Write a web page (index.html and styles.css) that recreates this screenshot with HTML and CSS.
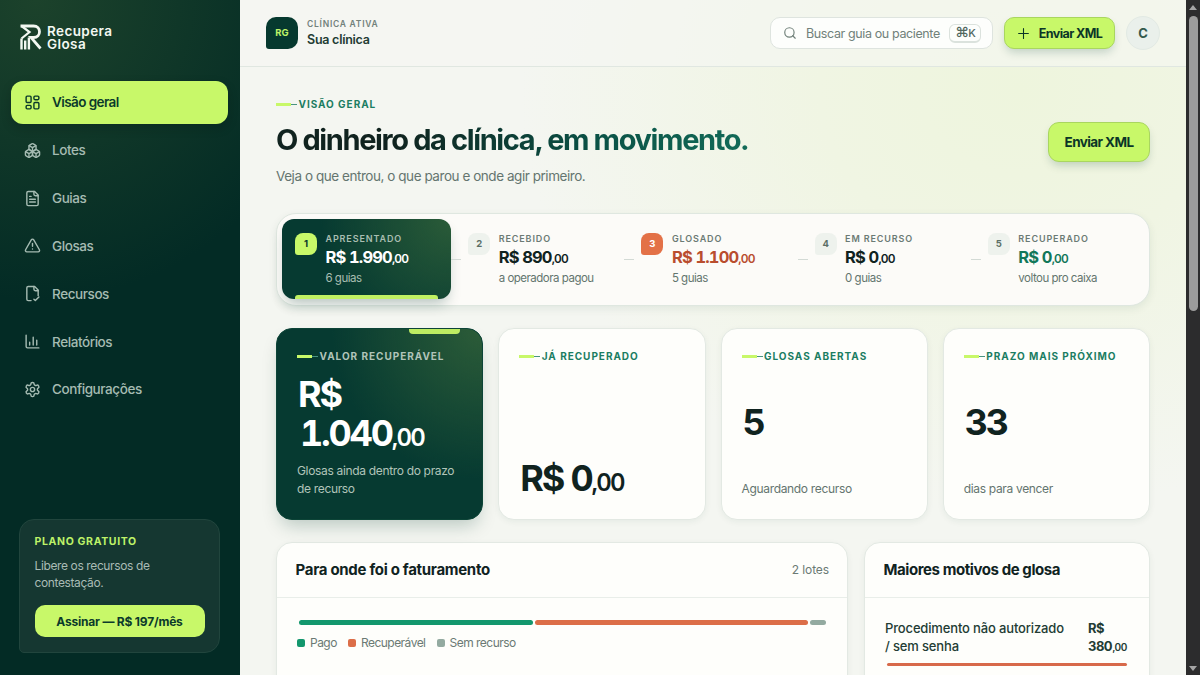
FILE: index.html
```html
<!DOCTYPE html>
<html lang="pt-BR">
<head>
<meta charset="UTF-8">
<title>Recupera Glosa</title>
<link rel="stylesheet" href="styles.css">
</head>
<body>
<div class="app">
  <aside class="sidebar">
    <div class="brand">
      <svg class="brand-mark" viewBox="0 0 22 26" fill="none" stroke="currentColor">
        <path d="M.500 2h13c8 0 8 11.500 0 11.500H11l9.500 11" stroke-width="2.800"/>
        <path d="M1.500 2l8 6-8 6.500" stroke-width="2.200"/>
        <path d="M1.500 14.500V25.500M5.200 16.500v9M8.900 13.500v12" stroke-width="2.400"/>
      </svg>
      <div class="brand-name">Recupera<br>Glosa</div>
    </div>
    <nav class="nav">
      <a class="nav-item active">
        <svg class="icon" viewBox="0 0 24 24"><rect x="3" y="3" width="7" height="9" rx="1.500"/><rect x="14" y="3" width="7" height="5" rx="1.500"/><rect x="14" y="12" width="7" height="9" rx="1.500"/><rect x="3" y="16" width="7" height="5" rx="1.500"/></svg>
        <span>Visão geral</span>
      </a>
      <a class="nav-item lotes">
        <svg class="icon" viewBox="0 0 24 24"><path d="M2.970 12.920A2 2 0 0 0 2 14.630v3.240a2 2 0 0 0 .970 1.710l3 1.800a2 2 0 0 0 2.060 0L12 19v-5.500l-5-3-4.030 2.420Z"/><path d="m7 16.500-4.740-2.850M7 16.500l5-3M7 16.500v5.170"/><path d="M12 13.500V19l3.970 2.380a2 2 0 0 0 2.060 0l3-1.800a2 2 0 0 0 .970-1.710v-3.240a2 2 0 0 0-.970-1.710L17 10.500l-5 3Z"/><path d="m17 16.500-5-3M17 16.500l4.740-2.850M17 16.500v5.170"/><path d="M7.970 4.420A2 2 0 0 0 7 6.130v4.370l5 3 5-3V6.130a2 2 0 0 0-.970-1.710l-3-1.800a2 2 0 0 0-2.060 0l-3 1.800Z"/><path d="M12 8 7.260 5.150M12 8l4.740-2.850M12 13.500V8"/></svg>
        <span>Lotes</span>
      </a>
      <a class="nav-item guias">
        <svg class="icon" viewBox="0 0 24 24"><path d="M15 2H6a2 2 0 0 0-2 2v16a2 2 0 0 0 2 2h12a2 2 0 0 0 2-2V7Z"/><path d="M14 2v4a2 2 0 0 0 2 2h4M10 9H8M16 13H8M16 17H8"/></svg>
        <span>Guias</span>
      </a>
      <a class="nav-item glosas">
        <svg class="icon" viewBox="0 0 24 24"><path d="m21.730 18-8-14a2 2 0 0 0-3.480 0l-8 14A2 2 0 0 0 4 21h16a2 2 0 0 0 1.730-3"/><path d="M12 9v4M12 17h.010"/></svg>
        <span>Glosas</span>
      </a>
      <a class="nav-item recursos">
        <svg class="icon" viewBox="0 0 24 24"><path d="M10 22H6a2 2 0 0 1-2-2V4a2 2 0 0 1 2-2h9l5 5v8"/><path d="M14 2v4a2 2 0 0 0 2 2h4"/><path d="m14 20 2 2 5-5"/></svg>
        <span>Recursos</span>
      </a>
      <a class="nav-item relatorios">
        <svg class="icon" viewBox="0 0 24 24"><path d="M3 3v16a2 2 0 0 0 2 2h16M13 17V6M18 17v-7M8 17v-4"/></svg>
        <span>Relatórios</span>
      </a>
      <a class="nav-item config">
        <svg class="icon" viewBox="0 0 24 24"><path d="M12.220 2h-.440a2 2 0 0 0-2 2v.180a2 2 0 0 1-1 1.730l-.430.250a2 2 0 0 1-2 0l-.150-.080a2 2 0 0 0-2.730.730l-.220.380a2 2 0 0 0 .730 2.730l.150.100a2 2 0 0 1 1 1.720v.510a2 2 0 0 1-1 1.740l-.150.090a2 2 0 0 0-.730 2.730l.220.380a2 2 0 0 0 2.730.730l.150-.080a2 2 0 0 1 2 0l.430.250a2 2 0 0 1 1 1.730V20a2 2 0 0 0 2 2h.440a2 2 0 0 0 2-2v-.180a2 2 0 0 1 1-1.730l.430-.250a2 2 0 0 1 2 0l.150.080a2 2 0 0 0 2.730-.730l.220-.390a2 2 0 0 0-.730-2.730l-.150-.080a2 2 0 0 1-1-1.740v-.500a2 2 0 0 1 1-1.740l.150-.090a2 2 0 0 0 .730-2.730l-.220-.380a2 2 0 0 0-2.730-.730l-.150.080a2 2 0 0 1-2 0l-.430-.250a2 2 0 0 1-1-1.730V4a2 2 0 0 0-2-2z"/><circle cx="12" cy="12" r="3"/></svg>
        <span>Configurações</span>
      </a>
    </nav>
    <div class="plan">
      <div class="plan-title">PLANO GRATUITO</div>
      <p class="plan-text">Libere os recursos de<br>contestação.</p>
      <button class="plan-btn"><span>Assinar — R$ 197/mês</span></button>
    </div>
  </aside>

  <main class="main">
    <header class="topbar">
      <div class="clinic-logo">RG</div>
      <div class="clinic">
        <div class="clinic-label">CLÍNICA ATIVA</div>
        <div class="clinic-name">Sua clínica</div>
      </div>
      <div class="search">
        <svg class="icon" viewBox="0 0 24 24"><circle cx="11" cy="11" r="8"/><path d="m21 21-4.300-4.300"/></svg>
        <span class="search-text">Buscar guia ou paciente</span>
        <kbd>⌘<span>K</span></kbd>
      </div>
      <button class="btn btn-top">
        <svg class="icon" viewBox="0 0 24 24"><path d="M3 12h18M12 3v18"/></svg>
        <span>Enviar XML</span>
      </button>
      <div class="avatar">C</div>
    </header>

    <div class="content">
      <section class="hero">
        <div>
          <div class="eyebrow hero-eyebrow"><i></i><span>VISÃO GERAL</span></div>
          <h1>O dinheiro da clínica, em movimento.</h1>
          <p class="hero-text">Veja o que entrou, o que parou e onde agir primeiro.</p>
        </div>
        <button class="btn btn-hero"><span>Enviar XML</span></button>
      </section>

      <section class="flow">
        <div class="step current">
          <div class="num">1</div>
          <div>
            <div class="step-label">APRESENTADO</div>
            <div class="step-value">R$ 1.990<small>,00</small></div>
            <div class="step-note">6 guias</div>
          </div>
        </div>
        <div class="step">
          <div class="num">2</div>
          <div>
            <div class="step-label">RECEBIDO</div>
            <div class="step-value">R$ 890<small>,00</small></div>
            <div class="step-note">a operadora pagou</div>
          </div>
        </div>
        <div class="step denied">
          <div class="num">3</div>
          <div>
            <div class="step-label">GLOSADO</div>
            <div class="step-value">R$ 1.100<small>,00</small></div>
            <div class="step-note">5 guias</div>
          </div>
        </div>
        <div class="step">
          <div class="num">4</div>
          <div>
            <div class="step-label">EM RECURSO</div>
            <div class="step-value">R$ 0<small>,00</small></div>
            <div class="step-note">0 guias</div>
          </div>
        </div>
        <div class="step recovered">
          <div class="num">5</div>
          <div>
            <div class="step-label">RECUPERADO</div>
            <div class="step-value">R$ 0<small>,00</small></div>
            <div class="step-note">voltou pro caixa</div>
          </div>
        </div>
      </section>

      <section class="kpis">
        <div class="kpi kpi-dark">
          <div class="eyebrow"><i></i><span>VALOR RECUPERÁVEL</span></div>
          <div class="kpi-value">R$<br><span class="amount">1.040</span><small>,00</small></div>
          <div class="kpi-note">Glosas ainda dentro do prazo<br>de recurso</div>
        </div>
        <div class="kpi kpi-recovered">
          <div class="eyebrow"><i></i><span>JÁ RECUPERADO</span></div>
          <div class="kpi-value">R$ 0<small>,00</small></div>
        </div>
        <div class="kpi">
          <div class="eyebrow"><i></i><span>GLOSAS ABERTAS</span></div>
          <div class="kpi-value">5</div>
          <div class="kpi-note">Aguardando recurso</div>
        </div>
        <div class="kpi">
          <div class="eyebrow"><i></i><span>PRAZO MAIS PRÓXIMO</span></div>
          <div class="kpi-value">33</div>
          <div class="kpi-note">dias para vencer</div>
        </div>
      </section>

      <section class="panels">
        <div class="panel">
          <div class="panel-head">
            <h2>Para onde foi o faturamento</h2>
            <span class="panel-count">2 lotes</span>
          </div>
          <div class="bar">
            <div class="paid"></div>
            <div class="recoverable"></div>
            <div class="lost"></div>
          </div>
          <div class="legend">
            <span class="key paid"></span><span>Pago</span>
            <span class="key recoverable"></span><span>Recuperável</span>
            <span class="key lost"></span><span>Sem recurso</span>
          </div>
        </div>
        <div class="panel">
          <div class="panel-head">
            <h2 class="reasons-title">Maiores motivos de glosa</h2>
          </div>
          <div class="reason">
            <div class="reason-name">Procedimento não autorizado<br>/ sem senha</div>
            <div class="reason-value">R$<br>380<small>,00</small></div>
          </div>
          <div class="reason-bar"></div>
        </div>
      </section>
    </div>
  </main>

  <div class="scrollbar">
    <div class="arrow up"></div>
    <div class="thumb"></div>
    <div class="arrow down"></div>
  </div>
</div>
</body>
</html>
```
FILE: styles.css
```css
* {
  box-sizing: border-box;
}
body {
  margin: 0;
  font-family: Inter, "Liberation Sans", sans-serif;
  color: #10231f;
  overflow: hidden;
}
h1, h2, p {
  margin: 0;
}
button {
  font-family: inherit;
  padding: 0;
}
.app {
  display: grid;
  grid-template-columns: 240px 946px 14px;
  grid-template-rows: 675px;
  height: 675px;
  overflow: hidden;
}
.icon {
  fill: none;
  stroke: currentColor;
  stroke-width: 2;
  stroke-linecap: round;
  stroke-linejoin: round;
  flex: none;
}

/* sidebar */
.sidebar {
  display: flex;
  flex-direction: column;
  padding: 24px 12px 22px 11px;
  background: radial-gradient(circle at 15% 0, #1c422b 0, rgba(28, 66, 43, 0) 300px), #032b25;
}
.brand {
  display: flex;
  gap: 5px;
  padding-left: 9px;
  color: #f3f8f2;
}
.brand-mark {
  width: 22px;
  height: 26px;
}
.brand-name {
  font-size: 13.500px;
  line-height: 13px;
  font-weight: 600;
  letter-spacing: 0.400px;
  padding-top: 1px;
}
.nav {
  display: flex;
  flex-direction: column;
  gap: 5px;
  margin-top: 30px;
}
.nav-item {
  display: flex;
  align-items: center;
  gap: 11px;
  height: 42.850px;
  padding-left: 13px;
  border-radius: 12px;
  font-size: 13.500px;
  font-weight: 550;
  letter-spacing: -0.420px;
  color: #a5bbb2;
}
.nav-item .icon {
  width: 17px;
  height: 17px;
}
.nav-item.active {
  background: #c8f869;
  color: #0b3a2b;
  font-weight: 600;
  letter-spacing: -0.580px;
  box-shadow: 0 4px 10px rgba(0, 20, 14, 0.250);
}
.plan {
  margin: auto 8px 0;
  height: 134px;
  padding: 15px 14.500px 0;
  border: 1px solid #21453d;
  border-radius: 15px 15px 15px 5px;
  background: #153731;
}
.plan-title {
  font-size: 10.500px;
  line-height: 14px;
  font-weight: 700;
  letter-spacing: 0.650px;
  color: #bdf268;
}
.plan-text {
  margin: 8px 0 14px;
  font-size: 12px;
  line-height: 17px;
  letter-spacing: -0.380px;
  color: #a9bbb5;
}
.plan-btn {
  width: 170px;
  height: 32px;
  border: 0;
  border-radius: 10px;
  background: #c8f869;
  color: #0b3a2b;
  font-size: 12px;
  font-weight: 700;
  letter-spacing: -0.200px;
}

/* main column */
.main {
  background:
    radial-gradient(ellipse 500px 420px at 780px 90px, #eef5dd 0, #f0f5e3 40%, rgba(244, 246, 241, 0) 100%),
    #f4f6f1;
}
.topbar {
  display: flex;
  align-items: center;
  height: 67px;
  padding: 0 26px;
  border-bottom: 1px solid #e0e7e1;
  background: rgba(245, 246, 243, 0.600);
}
.clinic-logo {
  width: 32px;
  height: 32px;
  border-radius: 10px 10px 10px 3px;
  background: #06392f;
  color: #bdf268;
  font-size: 9.500px;
  font-weight: 700;
  line-height: 32px;
  text-align: center;
}
.clinic {
  margin-left: 9px;
  padding-bottom: 1px;
}
.clinic-label {
  font-size: 8.500px;
  line-height: 14px;
  font-weight: 600;
  letter-spacing: 0.750px;
  color: #72817b;
}
.clinic-name {
  font-size: 12.500px;
  line-height: 17px;
  font-weight: 600;
  letter-spacing: -0.250px;
  color: #233c34;
}
.search {
  display: flex;
  align-items: center;
  width: 223px;
  height: 32px;
  margin-left: auto;
  padding: 0 11px 0 12px;
  border: 1px solid #dee4df;
  border-radius: 10px;
  background: #fdfefc;
  color: #71817a;
}
.search .icon {
  width: 14px;
  height: 14px;
}
.search-text {
  margin-left: 9px;
  font-size: 12.500px;
  letter-spacing: -0.380px;
  white-space: nowrap;
}
kbd {
  width: 32px;
  height: 19px;
  margin-left: auto;
  border: 1px solid #dbe2dd;
  border-bottom-width: 2px;
  border-radius: 6px;
  font: 500 14px/14px Inter, "DejaVu Sans", sans-serif;
  letter-spacing: -1px;
  text-align: center;
  color: #52675f;
}
kbd span {
  font-size: 11px;
}
.btn {
  display: flex;
  align-items: center;
  justify-content: center;
  border: 1px solid #a9d65f;
  background: #c8f869;
  color: #0b3527;
  font-weight: 700;
  box-shadow: 0 5px 10px -2px rgba(10, 70, 50, 0.220);
}
.btn-top {
  gap: 9px;
  width: 111px;
  height: 32px;
  margin-left: 11px;
  border-radius: 10px;
  font-size: 12.500px;
  letter-spacing: -0.580px;
}
.btn-top .icon {
  width: 13px;
  height: 13px;
}
.avatar {
  width: 34px;
  height: 34px;
  margin-left: 11px;
  border: 1px solid #e2eae4;
  border-radius: 50%;
  background: #eaf0eb;
  color: #34594b;
  font-size: 13px;
  font-weight: 700;
  line-height: 32px;
  text-align: center;
}
.content {
  padding: 29px 36px 0;
}
.eyebrow {
  display: flex;
  align-items: center;
  height: 16px;
  font-size: 10px;
  font-weight: 700;
  letter-spacing: 0.970px;
  color: #1b7d62;
  white-space: nowrap;
}
.eyebrow i {
  width: 22.500px;
  height: 3px;
  flex: none;
  background:
    linear-gradient(#c8f869, #c8f869) 0 0 / 15px 3px no-repeat,
    linear-gradient(#4a9480, #4a9480) 15px 1px / 6px 1px no-repeat;
}
.hero {
  display: flex;
  justify-content: space-between;
  height: 117px;
}
h1 {
  margin-top: 10px;
  font-size: 29px;
  line-height: 36px;
  font-weight: 650;
  letter-spacing: -1.380px;
  white-space: nowrap;
  color: transparent;
  background: linear-gradient(100deg, #10231f 25%, #0a5246 68%, #126b58);
  background-clip: text;
  -webkit-background-clip: text;
}
.hero-text {
  margin-top: 8px;
  font-size: 13.500px;
  line-height: 20px;
  letter-spacing: -0.450px;
  color: #64756f;
}
.btn-hero {
  width: 102px;
  height: 40px;
  margin-top: 26px;
  border-radius: 11px;
  font-size: 13.500px;
  letter-spacing: -0.600px;
}

/* five-step money flow */
.flow {
  display: grid;
  grid-template-columns: repeat(5, 1fr);
  gap: 4px;
  height: 93px;
  padding: 5px 5px 6px;
  border: 1px solid #dfe7e0;
  border-radius: 20px;
  background: #fcfbf8;
  box-shadow: 0 3px 8px rgba(15, 60, 45, 0.080);
}
.step {
  position: relative;
  display: flex;
  gap: 8.500px;
  padding: 14px 0 0 13px;
  white-space: nowrap;
}
.step + .step::before {
  content: "";
  position: absolute;
  left: -4px;
  top: 40px;
  width: 10px;
  height: 1px;
  background: #d3dad5;
}
.num {
  width: 22px;
  height: 22px;
  border-radius: 8px 8px 8px 3px;
  background: #eef2ed;
  color: #5b6f66;
  font-size: 9.500px;
  font-weight: 700;
  line-height: 22px;
  text-align: center;
}
.step-label {
  font-size: 9px;
  line-height: 12px;
  font-weight: 600;
  letter-spacing: 0.880px;
  color: #6b7a74;
}
.step-value {
  margin-top: 2px;
  font-size: 16.500px;
  line-height: 21px;
  font-weight: 700;
  font-variant-numeric: tabular-nums;
  letter-spacing: -0.850px;
}
.step-value small {
  font-size: 12px;
  font-weight: 600;
  letter-spacing: -0.800px;
}
.step-note {
  margin-top: 1px;
  font-size: 11.500px;
  line-height: 16px;
  letter-spacing: -0.500px;
  color: #63756e;
}
.current {
  border-radius: 12px;
  background: radial-gradient(circle at 100% 0, #2a5b38 0, rgba(42, 91, 56, 0) 130px), #063a31;
  box-shadow: 0 8px 14px -4px rgba(6, 58, 49, 0.300);
}
.current::after {
  content: "";
  position: absolute;
  left: 13px;
  right: 13px;
  bottom: 0;
  height: 4px;
  border-radius: 3px 3px 0 0;
  background: #c0f062;
}
.current .num {
  background: #c8f869;
  color: #0b3a2b;
}
.current .step-label,
.current .step-note {
  color: #a9beb1;
}
.current .step-value {
  color: #fff;
}
.denied .num {
  background: #e37147;
  color: #fff;
}
.denied .step-value {
  color: #b94d2e;
}
.recovered .step-value {
  color: #12775a;
}

/* kpi cards */
.kpis {
  display: grid;
  grid-template-columns: repeat(4, 1fr);
  gap: 15px;
  margin-top: 22px;
}
.kpi {
  position: relative;
  display: flex;
  flex-direction: column;
  justify-content: space-between;
  height: 192px;
  padding: 19px 20px 21px;
  border: 1px solid #e3e9e3;
  border-radius: 16px;
  background: #fefefb;
  box-shadow: 0 2px 6px rgba(15, 60, 45, 0.060);
}
.kpi-value {
  padding: 1px 0 0 1px;
  font-size: 36px;
  line-height: 39px;
  font-weight: 700;
  font-variant-numeric: tabular-nums;
  letter-spacing: -2.200px;
  white-space: nowrap;
}
.kpi-value small {
  font-size: 24px;
  font-weight: 600;
  letter-spacing: -1.800px;
}
.kpi-note {
  font-size: 12px;
  line-height: 18px;
  letter-spacing: -0.330px;
  white-space: nowrap;
  color: #64756f;
}
.kpi-dark {
  border-color: #0c4437;
  background: radial-gradient(circle at 100% 0, #2c5c38 0, rgba(44, 92, 56, 0) 150px), #063a31;
  box-shadow: 0 10px 18px -5px rgba(6, 58, 49, 0.250);
}
.kpi-dark::before {
  content: "";
  position: absolute;
  right: 22px;
  top: 0;
  width: 51px;
  height: 5px;
  border-radius: 0 0 4px 4px;
  background: #bdec62;
}
.kpi-dark .eyebrow,
.kpi-dark .kpi-note {
  color: #b1c4b9;
}
.kpi-dark .kpi-value {
  padding-top: 5px;
  color: #fff;
}
.amount {
  margin-left: 2px;
}
.kpi-recovered {
  padding-bottom: 17px;
}

/* bottom panels */
.panels {
  display: grid;
  grid-template-columns: 2fr 1fr;
  gap: 16px;
  margin-top: 22px;
}
.panel {
  height: 200px;
  border: 1px solid #e3e9e3;
  border-radius: 16px;
  background: #fefefb;
  box-shadow: 0 2px 6px rgba(15, 60, 45, 0.060);
}
.panel-head {
  display: flex;
  align-items: center;
  justify-content: space-between;
  height: 55px;
  padding: 0 18px 1px 18.500px;
  border-bottom: 1px solid #e9eee9;
}
h2 {
  font-size: 15px;
  font-weight: 650;
  letter-spacing: -0.300px;
  white-space: nowrap;
}
.reasons-title {
  letter-spacing: -0.420px;
}
.panel-count {
  font-size: 12px;
  letter-spacing: -0.100px;
  color: #6b7a74;
}
.paid {
  background: #13976d;
}
.recoverable {
  background: #dc6e48;
}
.lost {
  background: #93aaa0;
}
.bar {
  display: grid;
  grid-template-columns: 234px 273px 16px;
  gap: 2px;
  margin: 22px 0 0 21.500px;
}
.bar div {
  height: 5px;
  border-radius: 3px;
}
.legend {
  display: flex;
  align-items: center;
  margin: 9px 0 0 20px;
  font-size: 12px;
  line-height: 17px;
  letter-spacing: -0.520px;
  color: #6b7a74;
}
.key {
  width: 8px;
  height: 8px;
  margin-right: 5px;
  border-radius: 2px;
}
span + .key {
  margin-left: 11px;
}
.reason {
  display: flex;
  padding: 21px 20px 0;
  font-size: 13px;
  line-height: 18px;
  font-weight: 500;
  white-space: nowrap;
  color: #233c34;
}
.reason-name {
  width: 203px;
  letter-spacing: -0.150px;
}
.reason-value {
  font-weight: 700;
  letter-spacing: -0.500px;
}
.reason-value small {
  font-size: 10px;
  font-weight: 600;
}
.reason-bar {
  height: 3px;
  margin: 7px 22px 0;
  border-radius: 2px;
  background: #d7694a;
}

/* browser scrollbar */
.scrollbar {
  display: flex;
  flex-direction: column;
  align-items: center;
  padding: 5px 0 4px;
  background: #2c2c2d;
}
.thumb {
  width: 9px;
  height: 295px;
  margin-top: 6px;
  border-radius: 5px;
  background: #9c9c9c;
}
.arrow {
  border: 4px solid transparent;
}
.up {
  border-top: 0;
  border-bottom: 5px solid #a5a5a5;
}
.down {
  margin-top: auto;
  border-bottom: 0;
  border-top: 5px solid #a5a5a5;
}
```
